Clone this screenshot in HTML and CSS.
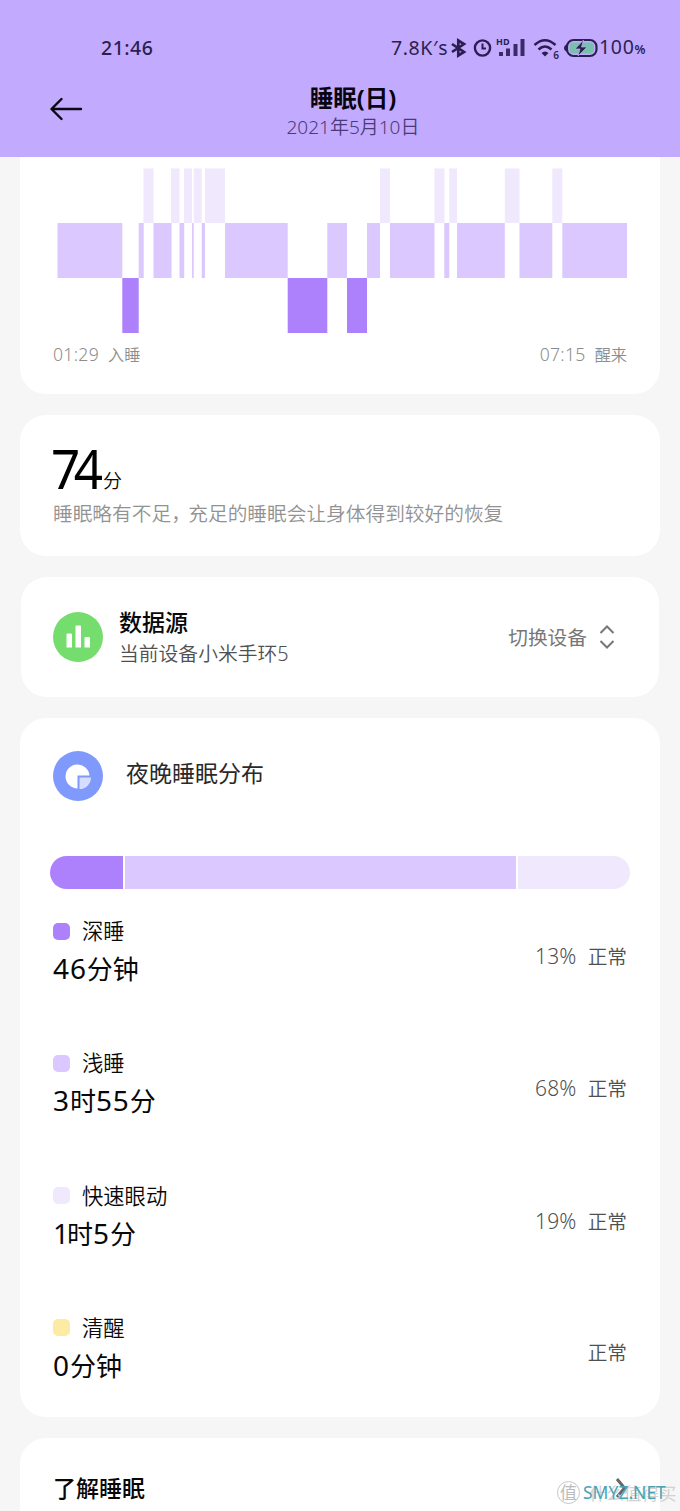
FILE: index.html
```html
<!DOCTYPE html>
<html lang="zh-CN">
<head>
<meta charset="utf-8">
<title>睡眠(日)</title>
<link rel="stylesheet" href="styles.css">
</head>
<body>
<header class="header">
  <div class="status">
    <span class="clock">21:46</span>
    <div class="indicators">
      <span class="speed">7.8K<i>′</i>s</span>
      <svg class="ic-bt" width="17" height="20" viewBox="0 0 17 20"><path d="M2 6 14 14 8.300 17.500V2.500L14 6 2 14" fill="none" stroke="#2c1f50" stroke-width="2.700"/></svg>
      <svg class="ic-alarm" width="19" height="20" viewBox="0 0 19 20"><circle cx="9.500" cy="10" r="7.600" fill="none" stroke="#2c1f50" stroke-width="2.400"/><path d="M9.500 5.500V10.500H13" fill="none" stroke="#2c1f50" stroke-width="2"/></svg>
      <div class="signal"><span class="hd">HD</span>
        <svg width="29" height="20" viewBox="0 0 29 20"><path d="M2 14h4v4H2zM9 10.500h4V18H9zM16.500 6h4v12h-4zM23.500 1h4v17h-4z" fill="#3a2a66"/></svg>
      </div>
      <div class="wifi"><svg width="25" height="20" viewBox="0 0 25 20"><path d="M1.500 7Q12 -2.500 22.500 7M5.500 11.500Q12 5.500 18.500 11.500" fill="none" stroke="#2c1f50" stroke-width="2.600"/><path d="M8.500 15Q12 12 15.500 15L12 18.500Z" fill="#2c1f50"/></svg><span class="gen">6</span></div>
      <svg class="ic-battery" width="35" height="20" viewBox="0 0 35 20"><path d="M5 6Q1 7 1 10t4 4" fill="#2c1f50"/><rect x="4" y="2" width="29.500" height="16" rx="6.500" fill="#c2abff" stroke="#2c1f50" stroke-width="2.200"/><rect x="6.500" y="4.500" width="24.500" height="11" rx="4" fill="#78bfae"/><path d="M20.500 2 12 11h5l-2 7 9-9h-5.500z" fill="#2c1f50" stroke="#c2abff" stroke-width=".7"/></svg>
      <span class="level">100<small>%</small></span>
    </div>
  </div>
  <div class="titlebar">
    <svg class="back" width="34" height="24" viewBox="0 0 34 24"><path d="M31 12H2.500M11.500 2 1.500 12l10 10" fill="none" stroke="#0b0714" stroke-width="2.400" stroke-linecap="round" stroke-linejoin="round"/></svg>
    <div class="titles"><h1>睡眠(日)</h1><p>2021年5月10日</p></div>
  </div>
</header>

<main class="content">
  <section class="card card-chart">
    <svg class="chart" width="571" height="166" viewBox="57 168 571 166">
      <g fill="#f0e8fd"><path d="M143.500 168.500h10v54.500h-10zM171 168.500h8.500v54.500H171zM184 168.500h8v54.500h-8zM193.700 168.500h8v54.500h-8zM205 168.500h20v54.500h-20zM380 168.500h10v54.500h-10zM434.500 168.500h10v54.500h-10zM449.300 168.500h7.700v54.500h-7.700zM504.800 168.500h14.700v54.500h-14.700zM552.300 168.500h10v54.500h-10z"/></g>
      <g fill="#dac8fe"><path d="M57.500 223H122.300v55H57.500zM138.700 223h5v55h-5zM153.500 223h18v55h-18zM179.500 223h4.700v55h-4.700zM192 223h1.700v55H192zM201.700 223h3.300v55h-3.300zM225 223h62.700v55H225zM327.300 223h19.700v55h-19.700zM367 223h13v55h-13zM390 223h44.500v55H390zM444.300 223h5v55h-5zM457 223h47.800v55H457zM519.500 223h32.800v55h-32.800zM562.300 223h64.700v55h-64.700z"/></g>
      <g fill="#ad80fc"><path d="M122.300 278h16.400v55h-16.400zM287.700 278h39.600v55h-39.600zM347 278h20v55h-20z"/></g>
    </svg>
    <div class="times"><span><b>01:29</b>入睡</span><span><b>07:15</b>醒来</span></div>
  </section>

  <section class="card card-score">
    <div class="score"><strong>74</strong><span>分</span></div>
    <p class="advice">睡眠略有不足<i>，</i>充足的睡眠会让身体得到较好的恢复</p>
  </section>

  <section class="card card-source">
    <svg class="badge" width="50" height="50" viewBox="0 0 50 50"><circle cx="25" cy="25" r="25" fill="#75dd6d"/><path d="M13.500 22.500q0-1 1-1h3.500q1 0 1 1V35.500h-5.500zM22.500 14.500q0-1 1-1h3.500q1 0 1 1v21h-5.500zM31.500 26q0-1 1-1h3.500q1 0 1 1v9.500h-5.500z" fill="#fff"/></svg>
    <div class="source-text"><h2>数据源</h2><p>当前设备小米手环5</p></div>
    <span class="switch">切换设备</span>
    <svg class="updown" width="16" height="24" viewBox="0 0 16 24"><path d="M1.500 8 8 1.500 14.500 8M1.500 16 8 22.500l6.500-6.500" fill="none" stroke="#777" stroke-width="2"/></svg>
  </section>

  <section class="card card-dist">
    <div class="dist-head">
      <svg width="50" height="50" viewBox="0 0 50 50"><circle cx="25" cy="25" r="25" fill="#7f99fc"/><path d="M24.500 37.500A12 12 0 1 1 36.500 24.500H24.500Z" fill="#fff"/><path d="M26.500 26.500H38A11.500 11.500 0 0 1 26.500 38Z" fill="#d5defe"/></svg>
      <h2>夜晚睡眠分布</h2>
    </div>
    <div class="bar"><i class="deep"></i><i class="light"></i><i class="rem"></i></div>
    <div class="row"><div class="stage"><div class="name"><i class="deep"></i>深睡</div><div class="dur"><b>46</b>分钟</div></div><div class="state"><b>13%</b>正常</div></div>
    <div class="row"><div class="stage"><div class="name"><i class="light"></i>浅睡</div><div class="dur"><b>3</b>时<b>55</b>分</div></div><div class="state"><b>68%</b>正常</div></div>
    <div class="row"><div class="stage"><div class="name"><i class="rem"></i>快速眼动</div><div class="dur"><b class="one">1</b>时<b>5</b>分</div></div><div class="state"><b>19%</b>正常</div></div>
    <div class="row"><div class="stage"><div class="name"><i class="awake"></i>清醒</div><div class="dur"><b>0</b>分钟</div></div><div class="state">正常</div></div>
  </section>

  <section class="card card-learn">
    <h2>了解睡眠</h2>
    <svg width="12" height="22" viewBox="0 0 12 22"><path d="M2 2l7.500 9L2 20" fill="none" stroke="#666" stroke-width="3"/></svg>
  </section>
</main>
<div class="watermark"><span class="seal">值</span><span class="brand">什么值得买</span><span class="site">SMYZ.NET</span></div>
</body>
</html>
```
FILE: styles.css
```css
* { box-sizing: border-box; margin: 0; padding: 0; }
body { position: relative; width: 680px; height: 1511px; overflow: hidden; background: #f6f6f6; color: #080808; font-family: "Noto Sans", "Noto Sans CJK SC", sans-serif; font-weight: 350; }
svg { display: block; flex: none; }
b, i { font-weight: inherit; font-style: normal; }
h1, h2, p, span { white-space: nowrap; }

.header { height: 157px; background: #c2abff; }
.status { display: flex; height: 72px; padding: 23px 34px 0 101px; justify-content: space-between; color: #2c1f50; }
.clock { font-size: 19.500px; font-weight: 500; line-height: 50px; letter-spacing: .5px; }
.indicators { display: flex; align-items: center; height: 50px; margin-right: 1px; }
.speed { width: 60px; font-size: 19.500px; font-weight: 400; line-height: 50px; letter-spacing: .6px; }
.ic-bt { margin-left: -1px; }
.ic-alarm { margin-left: 6px; }
.signal { position: relative; margin-left: 5px; }
.hd { position: absolute; left: -1px; top: -1px; font-size: 9px; line-height: 9px; font-weight: 700; }
.wifi { position: relative; margin-left: 7px; }
.gen { position: absolute; right: -1px; bottom: -2px; font-size: 10px; line-height: 10px; font-weight: 600; }
.ic-battery { margin-left: 5px; }
.level { width: 47px; font-size: 19.500px; font-weight: 400; line-height: 50px; letter-spacing: .7px; padding-left: 1px; }
.level small { font-size: 12.500px; font-weight: 600; }
.titlebar { display: flex; padding: 12px 0 0 50px; }
.back { margin-top: 13px; }
.titles { width: 538px; text-align: center; }
.titles h1 { font-size: 23.500px; line-height: 31px; margin-top: -1px; font-weight: 700; color: #08050f; }
.titles p { font-size: 19px; line-height: 26px; color: #4b3a76; }

.content { display: flex; flex-direction: column; gap: 21px; padding: 0 20px; }
.card { background: #fff; border-radius: 26px; flex: none; }
.card-chart { height: 237px; border-radius: 0 0 26px 26px; padding: 11px 33px 0 33px; }
.chart { margin-left: 4px; }
.times { display: flex; justify-content: space-between; padding-top: 7px; font-size: 16.200px; line-height: 26px; color: #8c8c8c; }
.times b { margin-right: 9px; font-size: 17.600px; letter-spacing: .3px; }

.card-score { height: 141px; padding: 24px 33px 0 31px; }
.score { display: flex; height: 60px; }
.score strong { width: 52px; font-size: 55px; line-height: 58px; font-weight: 400; letter-spacing: -7px; color: #000; transform: scaleX(.93); transform-origin: left; }
.score span { font-size: 19px; line-height: 84px; }
.advice { padding-left: 2px; font-size: 19.700px; line-height: 29px; color: #929292; }
.advice i { letter-spacing: -2.500px; }

.card-source { display: flex; height: 120px; margin: 0 1px; padding: 35px 44px 0 32px; }
.source-text { flex: 1; padding-left: 16px; margin-top: -6px; }
.source-text h2 { font-size: 23px; line-height: 32px; font-weight: 500; }
.source-text p { font-size: 19.800px; line-height: 32px; color: #505050; }
.switch { font-size: 19.700px; line-height: 51px; font-weight: 400; color: #777; }
.updown { margin: 13px 0 0 12px; }

.card-dist { height: 699px; padding: 33px 30px 0; }
.dist-head { display: flex; padding-left: 3px; }
.dist-head h2 { margin-left: 23px; font-size: 23px; line-height: 45px; font-weight: 400; color: #292929; }
.bar { display: flex; gap: 2px; height: 33px; margin: 54.500px 0 24.500px; border-radius: 17px; overflow: hidden; }
.bar .deep { width: 73px; }
.bar .light { width: 391px; }
.bar .rem { flex: 1; }
.deep { background: #ad80fc; }
.light { background: #dac8fe; }
.rem { background: #f0e8fd; }
.awake { background: #fdeaa3; }
.row { display: flex; justify-content: space-between; height: 132.300px; padding: 0 3px; }
.name { display: flex; align-items: center; height: 36px; font-size: 21.300px; line-height: 30px; }
.name i { width: 17px; height: 17px; margin-right: 12px; border-radius: 5px; }
.dur { margin-top: -2px; font-size: 26px; line-height: 42px; font-weight: 400; }
.dur b { font-size: 28px; letter-spacing: .9px; }
.dur .one { letter-spacing: -2px; }
.state { font-size: 19.700px; line-height: 86px; color: #505050; }
.state b { margin-right: 11px; font-size: 21px; letter-spacing: .2px; }

.card-learn { display: flex; justify-content: space-between; height: 120px; padding: 33px 33px 0; }
.card-learn h2 { font-size: 23px; line-height: 34px; font-weight: 500; }
.card-learn svg { margin-top: 6px; }

.watermark { position: absolute; left: 557px; top: 1480px; width: 123px; height: 26px; font-weight: 400; }
.seal { position: absolute; left: 0; top: 1px; width: 23px; height: 23px; border: 1px solid #c6c6c6; border-radius: 50%; font-size: 17px; line-height: 21px; text-align: center; color: #bcbcbc; }
.brand { position: absolute; left: 32px; top: 0; font-size: 17.500px; line-height: 26px; color: #d2d2d2; }
.site { position: absolute; left: 26px; top: -1px; font-size: 17.500px; line-height: 26px; color: #4aa3b5; }
```
